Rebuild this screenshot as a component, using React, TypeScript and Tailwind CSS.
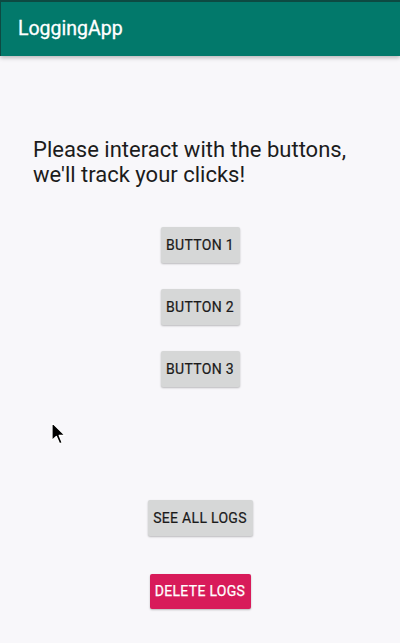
import React from 'react';

const font = { fontFamily: 'Roboto, "Noto Sans", sans-serif' };

function GrayButton({ label, className = '' }: { label: string; className?: string }) {
  return (
    <button
      className={`h-[36px] whitespace-nowrap rounded-[2px] bg-[#d6d7d7] text-[14px] font-normal tracking-[0.3px] text-[#1a1a1a] [-webkit-text-stroke:0.2px_currentColor] shadow-[0_1px_2px_rgba(0,0,0,0.25)] ${className}`}
    >
      {label}
    </button>
  );
}

export default function App() {
  return (
    <div className="relative flex h-[643px] w-[400px] flex-col overflow-hidden bg-[#f8f7fa]" style={font}>
      {/* App bar */}
      <div className="flex h-[56px] shrink-0 items-center border-t-2 border-l border-[#0d4a42] bg-[#02796b] pl-[17px] shadow-[0_2px_4px_rgba(0,0,0,0.25)]">
        <span className="text-[19.5px] font-normal text-white [-webkit-text-stroke:0.3px_currentColor]">LoggingApp</span>
      </div>

      <div className="flex flex-1 flex-col items-center">
        <p className="mt-[81px] w-full pl-[33px] text-[22px] leading-[25px] text-[#1c1c1c]">
          Please interact with the buttons,
          <br />
          we'll track your clicks!
        </p>

        <div className="mt-[40px] flex flex-col items-center gap-[26px]">
          <GrayButton label="BUTTON 1" className="w-[79px]" />
          <GrayButton label="BUTTON 2" className="w-[79px]" />
          <GrayButton label="BUTTON 3" className="w-[79px]" />
        </div>

        <GrayButton label="SEE ALL LOGS" className="mt-[113px] w-[105px]" />

        <button className="mt-[38px] h-[35px] w-[101px] whitespace-nowrap rounded-[2px] bg-[#d81b5a] text-[14px] font-normal tracking-[0.3px] text-white [-webkit-text-stroke:0.25px_currentColor] shadow-[0_1px_2px_rgba(0,0,0,0.25)]">
          DELETE LOGS
        </button>
      </div>

      {/* mouse cursor */}
      <svg className="absolute left-[50px] top-[421px]" width="18" height="26" viewBox="0 0 16 24">
        <path
          d="M1.5 1.5 L1.5 18 L5.5 14.2 L8.5 21 L11 20 L8.2 13.3 L13.5 13.3 Z"
          fill="#000"
          stroke="#fff"
          strokeWidth="1.2"
          strokeLinejoin="round"
        />
      </svg>
    </div>
  );
}
